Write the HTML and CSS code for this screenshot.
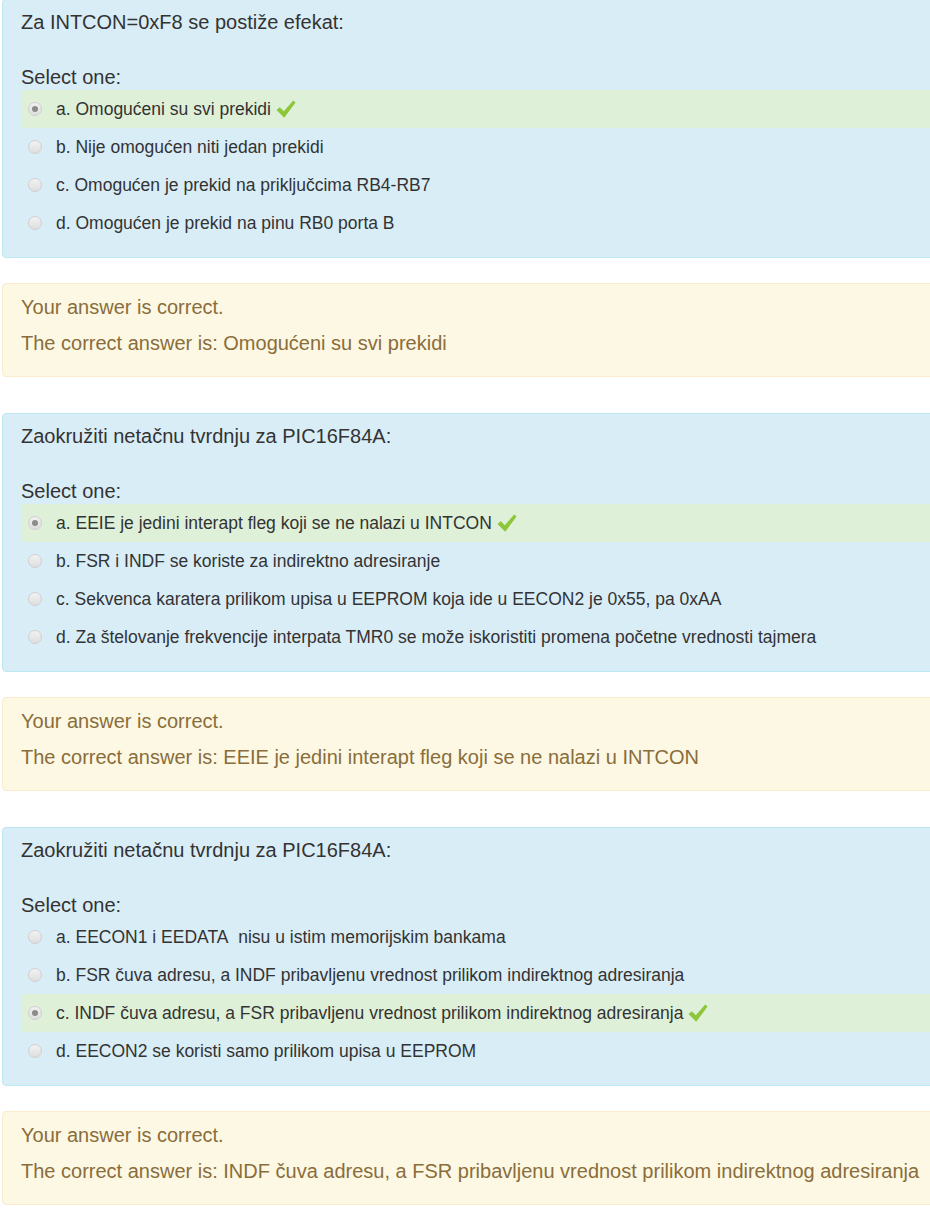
FILE: index.html
```html
<!DOCTYPE html>
<html lang="sr">
<head>
<meta charset="utf-8">
<title>Quiz review</title>
<link rel="stylesheet" href="styles.css">
</head>
<body>
<div class="page">

  <div class="que">
    <div class="qtext">Za INTCON=0xF8 se postiže efekat:</div>
    <div class="prompt">Select one:</div>
    <div class="answer">
      <div class="opt correct"><span class="radio checked"></span><span class="label">a. Omogućeni su svi prekidi</span><svg class="tick" viewBox="0 0 20 20"><path d="M0.5 11 L3.8 8.3 L7.8 12.3 L17.2 1.5 L19.6 3.6 L8.2 18.8 Z"/></svg></div>
      <div class="opt"><span class="radio"></span><span class="label">b. Nije omogućen niti jedan prekidi</span></div>
      <div class="opt"><span class="radio"></span><span class="label">c. Omogućen je prekid na priključcima RB4-RB7</span></div>
      <div class="opt"><span class="radio"></span><span class="label">d. Omogućen je prekid na pinu RB0 porta B</span></div>
    </div>
  </div>
  <div class="feedback">
    <div class="fline">Your answer is correct.</div>
    <div class="fline">The correct answer is: Omogućeni su svi prekidi</div>
  </div>

  <div class="que">
    <div class="qtext">Zaokružiti netačnu tvrdnju za PIC16F84A:</div>
    <div class="prompt">Select one:</div>
    <div class="answer">
      <div class="opt correct"><span class="radio checked"></span><span class="label">a. EEIE je jedini interapt fleg koji se ne nalazi u INTCON</span><svg class="tick" viewBox="0 0 20 20"><path d="M0.5 11 L3.8 8.3 L7.8 12.3 L17.2 1.5 L19.6 3.6 L8.2 18.8 Z"/></svg></div>
      <div class="opt"><span class="radio"></span><span class="label">b. FSR i INDF se koriste za indirektno adresiranje</span></div>
      <div class="opt"><span class="radio"></span><span class="label">c. Sekvenca karatera prilikom upisa u EEPROM koja ide u EECON2 je 0x55, pa 0xAA</span></div>
      <div class="opt"><span class="radio"></span><span class="label">d. Za štelovanje frekvencije interpata TMR0 se može iskoristiti promena početne vrednosti tajmera</span></div>
    </div>
  </div>
  <div class="feedback">
    <div class="fline">Your answer is correct.</div>
    <div class="fline">The correct answer is: EEIE je jedini interapt fleg koji se ne nalazi u INTCON</div>
  </div>

  <div class="que">
    <div class="qtext">Zaokružiti netačnu tvrdnju za PIC16F84A:</div>
    <div class="prompt">Select one:</div>
    <div class="answer">
      <div class="opt"><span class="radio"></span><span class="label">a. EECON1 i EEDATA&nbsp; nisu u istim memorijskim bankama</span></div>
      <div class="opt"><span class="radio"></span><span class="label">b. FSR čuva adresu, a INDF pribavljenu vrednost prilikom indirektnog adresiranja</span></div>
      <div class="opt correct"><span class="radio checked"></span><span class="label">c. INDF čuva adresu, a FSR pribavljenu vrednost prilikom indirektnog adresiranja</span><svg class="tick" viewBox="0 0 20 20"><path d="M0.5 11 L3.8 8.3 L7.8 12.3 L17.2 1.5 L19.6 3.6 L8.2 18.8 Z"/></svg></div>
      <div class="opt"><span class="radio"></span><span class="label">d. EECON2 se koristi samo prilikom upisa u EEPROM</span></div>
    </div>
  </div>
  <div class="feedback">
    <div class="fline">Your answer is correct.</div>
    <div class="fline">The correct answer is: INDF čuva adresu, a FSR pribavljenu vrednost prilikom indirektnog adresiranja</div>
  </div>

</div>
</body>
</html>
```

FILE: styles.css
```css
html {
  overflow: hidden;
}

body {
  margin: 0;
  background: #ffffff;
  font-family: "Liberation Sans", Arial, Helvetica, sans-serif;
  color: #333333;
}

.page {
  margin-top: -1px;
  margin-left: 2px;
  width: 950px;
}

.que {
  background: #d9edf7;
  border: 1px solid #bce8f1;
  border-radius: 4px;
  padding: 10px 18px 15px 18px;
}

.qtext {
  font-size: 20px;
  line-height: 24px;
}

.prompt {
  font-size: 20px;
  line-height: 24px;
  margin-top: 31px;
  margin-bottom: 1px;
}

.answer {
  display: flex;
  flex-direction: column;
}

.opt {
  display: flex;
  align-items: center;
  height: 38px;
  font-size: 17.5px;
}

.opt.correct {
  background: #dff0d8;
}

.radio {
  width: 14px;
  height: 14px;
  box-sizing: border-box;
  border-radius: 50%;
  border: 1px solid #cfcfcf;
  background: linear-gradient(#f2f2f2, #dedede);
  margin-left: 7px;
  margin-right: 14px;
  display: flex;
  align-items: center;
  justify-content: center;
  flex: none;
}

.radio.checked::after {
  content: "";
  width: 6px;
  height: 6px;
  border-radius: 50%;
  background: #8c8c8c;
}

.label {
  white-space: nowrap;
}

.tick {
  width: 20px;
  height: 20px;
  margin-left: 5px;
  fill: #8cc63a;
  flex: none;
}

.feedback {
  margin-top: 25px;
  margin-bottom: 36px;
  background: #fcf8e3;
  border: 1px solid #faebcc;
  border-radius: 4px;
  padding: 11px 18px 9px 18px;
  color: #8a6d3b;
}

.fline {
  font-size: 20px;
  line-height: 24px;
  margin-bottom: 12px;
}
```
